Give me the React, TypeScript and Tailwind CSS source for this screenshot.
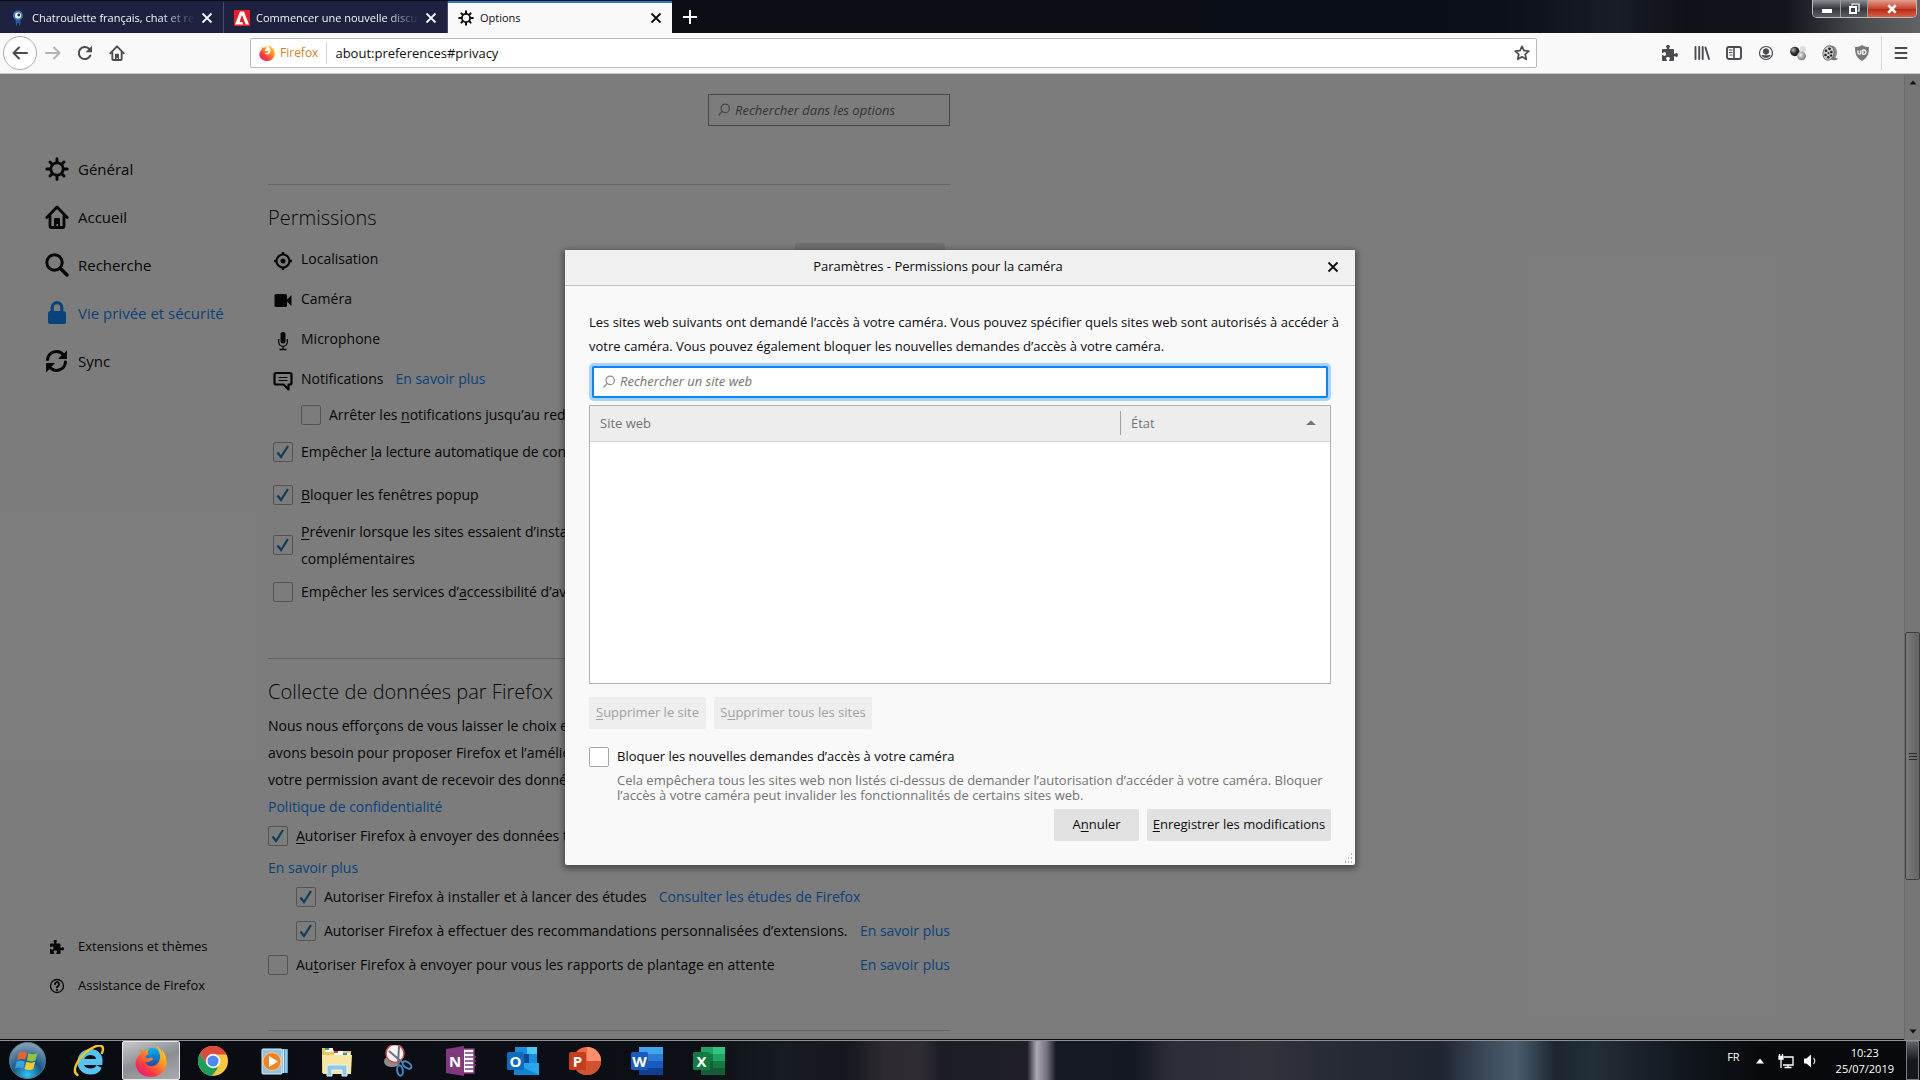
import type { ReactNode } from "react";

// ---------- Icons ----------

type IconProps = { className?: string };

const GearIcon = ({ className = "size-4" }: IconProps) => (
  <svg viewBox="0 0 24 24" className={className} fill="none" stroke="currentColor" strokeLinecap="round">
    <circle cx="12" cy="12" r="6.2" strokeWidth="2.8" />
    <path strokeWidth="3" d="M12 5V1.8M12 22.200V19M19 12h3.200M1.800 12H5M17 7l2-2M5 19l2-2M17 17l2 2M5 5l2 2" />
  </svg>
);

const HomeIcon = ({ className = "size-4" }: IconProps) => (
  <svg viewBox="0 0 24 24" className={className} fill="none" stroke="currentColor" strokeWidth="2.800">
    <path strokeLinecap="round" strokeLinejoin="round" d="M1.800 12.500 12 2l10.200 10.500M5 11v10a1.500 1.500 0 0 0 1.500 1.500h11A1.500 1.500 0 0 0 19 21V11" />
    <path fill="currentColor" stroke="none" d="M9 22v-8a1 1 0 0 1 1-1h4a1 1 0 0 1 1 1v8h-2v-3h-1.500v3z" />
  </svg>
);

const SearchIcon = ({ className = "size-6" }: IconProps) => (
  <svg viewBox="0 0 24 24" className={className} fill="none" stroke="currentColor" strokeLinecap="round">
    <circle cx="9.500" cy="9.500" r="7.700" strokeWidth="3" />
    <path strokeWidth="3.400" d="m15.500 15.500 6.500 6.500" />
  </svg>
);

const LockIcon = ({ className = "size-6" }: IconProps) => (
  <svg viewBox="0 0 24 24" className={className}>
    <rect x="3" y="10" width="18" height="13" rx="2.500" fill="currentColor" />
    <path d="M7.200 11V6.500a4.800 4.800 0 0 1 9.600 0V11" fill="none" stroke="currentColor" strokeWidth="3.200" />
  </svg>
);

const SyncIcon = ({ className = "size-6" }: IconProps) => (
  <svg viewBox="0 0 24 24" className={className} fill="none" stroke="currentColor" strokeWidth="3">
    <path strokeLinecap="round" d="M2.500 10.500A9 9 0 0 1 18.500 6M20.500 13A9 9 0 0 1 5 18.500" />
    <path fill="currentColor" stroke="none" d="M22 1v9h-9l3.200-3.200L19.500 4ZM1 23.500V14h9l-3.200 3.200L3.500 21Z" />
  </svg>
);

const PuzzleIcon = ({ className = "size-4" }: IconProps) => (
  <svg viewBox="0 0 16 16" className={className} fill="currentColor">
    <path d="M14.500 8c-.971 0-1 1-1.750 1a.765.765 0 0 1-.750-.750V5a1 1 0 0 0-1-1H7.750A.765.765 0 0 1 7 3.250c0-.750 1-.779 1-1.750C8 .635 7.100 0 6 0S4 .635 4 1.500c0 .971 1 1 1 1.750a.765.765 0 0 1-.750.750H1a1 1 0 0 0-1 1v2.250A.765.765 0 0 0 .750 8c.750 0 .779-1 1.750-1C3.365 7 4 7.900 4 9s-.635 2-1.500 2c-.971 0-1-1-1.750-1a.765.765 0 0 0-.750.750V15a1 1 0 0 0 1 1h3.250a.765.765 0 0 0 .750-.750c0-.750-1-.779-1-1.750 0-.865.900-1.500 2-1.500s2 .635 2 1.500c0 .971-1 1-1 1.750a.765.765 0 0 0 .750.750H11a1 1 0 0 0 1-1v-3.250a.765.765 0 0 1 .750-.750c.750 0 .779 1 1.750 1 .865 0 1.500-.900 1.500-2s-.635-2-1.500-2z" />
  </svg>
);

const HelpIcon = ({ className = "size-4" }: IconProps) => (
  <svg viewBox="0 0 16 16" className={className} fill="none" stroke="currentColor">
    <circle cx="8" cy="8" r="6.500" strokeWidth="1.300" />
    <path strokeWidth="1.900" strokeLinecap="round" d="M5.900 6.200a2.100 2.100 0 1 1 3.100 1.900c-.7.400-1 .7-1 1.300" />
    <circle cx="8" cy="12" r="1.100" fill="currentColor" stroke="none" />
  </svg>
);

const LocationIcon = () => (
  <svg viewBox="0 0 20 20" className="size-5" fill="none" stroke="currentColor">
    <circle cx="10" cy="10" r="6.500" strokeWidth="2.200" />
    <circle cx="10" cy="10" r="2.500" fill="currentColor" stroke="none" />
    <path strokeWidth="2.500" d="M10 1v3M10 16v3M1 10h3M16 10h3" />
  </svg>
);

const CameraIcon = () => (
  <svg viewBox="0 0 20 20" className="size-5" fill="currentColor">
    <rect x="1.500" y="3" width="12.500" height="13" rx="1.500" />
    <path d="M13 9.500 18.500 4v11z" />
  </svg>
);

const MicIcon = () => (
  <svg viewBox="0 0 20 20" className="size-5" fill="none" stroke="currentColor">
    <rect x="7.500" y="1" width="5" height="11.500" rx="2.500" fill="currentColor" stroke="none" />
    <path strokeWidth="1.300" d="M5.700 8v3a4.300 4.300 0 0 0 8.600 0V8M10 15v3M6.500 18.500h7" />
  </svg>
);

const NotificationIcon = () => (
  <svg viewBox="0 0 20 20" className="size-5" fill="none" stroke="currentColor">
    <path strokeWidth="2.200" strokeLinejoin="round" d="M3 2h14A1.500 1.500 0 0 1 18.500 3.500v8.500a1.500 1.500 0 0 1-1.500 1.500H15.500v5l-5-5H3A1.500 1.500 0 0 1 1.500 12v-8.500A1.500 1.500 0 0 1 3 2z" />
    <path strokeWidth="1.200" d="M5.500 6.500h9M5.500 9.500h9" />
  </svg>
);

const MagnifierIcon = () => (
  <svg viewBox="0 0 14 14" className="size-3.5 shrink-0" fill="none" stroke="#8c8c8e" strokeWidth="1.200">
    <circle cx="8.200" cy="5.400" r="4.200" />
    <path d="M5.300 8.400 1.500 12.500" />
  </svg>
);

const CloseIcon = ({ className = "size-3" }: IconProps) => (
  <svg viewBox="0 0 12 12" className={className} fill="none" stroke="currentColor" strokeWidth="1.800">
    <path d="m1.500 1.500 9 9M10.500 1.500l-9 9" />
  </svg>
);

const FirefoxLogo = ({ className = "size-4" }: IconProps) => (
  <svg viewBox="0 0 32 32" className={className}>
    <defs>
      <linearGradient id="fx-body" x1="1" y1="0" x2="0.200" y2="1">
        <stop offset="0" stopColor="#ffe226" />
        <stop offset="0.400" stopColor="#ff9a1f" />
        <stop offset="0.750" stopColor="#ff3b3f" />
        <stop offset="1" stopColor="#e31587" />
      </linearGradient>
      <linearGradient id="fx-globe" x1="0" y1="0" x2="0" y2="1">
        <stop offset="0" stopColor="#00b3f4" />
        <stop offset="1" stopColor="#23339b" />
      </linearGradient>
    </defs>
    <circle cx="17" cy="14" r="11" fill="url(#fx-globe)" />
    <path
      fill="url(#fx-body)"
      d="M5.500 3c-.5 2.500.2 4 .8 5C2 12 0 16.500.8 20.500 2 27.500 8.500 32 16 32c9 0 15.500-7 15.500-15 0-6.500-3-10.500-5-13 1 2.500.5 4 .5 4-1-3.500-4-6-6-7.500 1.500 3.500 4.500 7 4 12-.4 5-4 8.500-8.500 8.500-3.500 0-6-2-6.500-4.500 1.500 1 3.500 1 5-.2 1.300-1 2.500-1.300 3-2 .2-.8-.8-1.800-2.500-1.500-1.700.4-2.500 1-4 .4-.9-.4-1.200-1.200-.8-2.200.5-1 2-1.300 2.800-1.800.3-1.300-.2-2-.8-2.400.2-1.200 1-2.300 2-3-2 0-4 1-5 2.500C8 5.700 6.500 5 5.500 3z"
    />
  </svg>
);

// Flat variant used in the address bar
const FirefoxMark = () => (
  <svg viewBox="0 0 32 32" className="size-4">
    <path
      fill="url(#fx-body)"
      d="M5.500 3c-.5 2.500.2 4 .8 5C2 12 0 16.500.8 20.500 2 27.500 8.500 32 16 32c9 0 15.500-7 15.500-15 0-6.500-3-10.500-5-13 1 2.500.5 4 .5 4-1-3.500-4-6-8-7.500 0 3.500 3.500 5 4 11-.4 4-2 6-5 7-3 .5-6-.5-7-3 1.500 1 3.500 1 5-.2 1.300-1 2.500-1.300 3-2 .2-.8-.8-1.800-2.500-1.500-1.700.4-2.500 1-4 .4-.9-.4-1.200-1.200-.8-2.200.5-1 2-1.300 2.800-1.800.3-1.300-.2-2-.8-2.400.2-1.200 1-2.300 2-3-2 0-4 1-5 2.500C8 5.700 6.500 5 5.500 3z"
    />
  </svg>
);

// ---------- Small building blocks ----------

function Check({ id, checked = false }: { id: string; checked?: boolean }) {
  return (
    <span className="relative size-5 shrink-0">
      <input
        id={id}
        type="checkbox"
        defaultChecked={checked}
        className="peer block size-5 appearance-none rounded-[2px] border border-[#a6a6a6] bg-transparent"
      />
      <svg viewBox="0 0 20 20" className="pointer-events-none absolute inset-0 hidden size-5 peer-checked:block" fill="none" stroke="#1a7fb8" strokeWidth="2.200">
        <path d="m4.500 10.500 3.500 4.500 7-11" />
      </svg>
    </span>
  );
}

const Key = ({ children }: { children: ReactNode }) => (
  <span className="underline underline-offset-2">{children}</span>
);

const Link = ({ children, className = "" }: { children: ReactNode; className?: string }) => (
  <a href="#privacy" className={`whitespace-nowrap text-[#1484f5] ${className}`}>
    {children}
  </a>
);

// ---------- Window chrome ----------

const tabs = [
  {
    title: "Chatroulette français, chat et rencontre",
    active: false,
    icon: (
      <svg viewBox="0 0 16 16" className="size-4">
        <circle cx="8" cy="5.500" r="5" fill="#3f74b5" />
        <circle cx="8" cy="5.500" r="3" fill="#fff" />
        <circle cx="8.800" cy="5" r="1.400" fill="#16254a" />
        <path d="M5.500 10h5l-.5 5.500H9V13H7v2.500H6z" fill="#2a5a9b" />
      </svg>
    ),
  },
  {
    title: "Commencer une nouvelle discussion",
    active: false,
    icon: (
      <svg viewBox="0 0 16 16" className="size-4">
        <path fill="#ed1c24" d="M0 0h16v16H0z" />
        <path fill="#fff" d="M6 1.500h4l5 13h-3.300L8 5l-2.200 6h3l.9 3.500H1z" />
        <path fill="#ed1c24" d="m8 6 3 8.500H9.200L8.300 12H5.800z" />
      </svg>
    ),
  },
  { title: "Options", active: true, icon: <GearIcon /> },
];

function TabBar() {
  return (
    <header className="flex h-[33px] bg-[linear-gradient(90deg,#0b0e14_0%,#0b0e14_55%,#0a0f18_78%,#181c24_84%,#0f1218_88%,#11151b_93%,#4a4d50_97%,#606264_100%)]">
      <div role="tablist" className="flex pt-px">
        {tabs.map((tab) => (
          <div
            key={tab.title}
            role="tab"
            aria-selected={tab.active}
            className={`flex w-56 items-center border-t-2 pr-2.5 pl-2.5 text-[11px] ${
              tab.active
                ? "border-t-[#2a7bd0] bg-[#f9f9fa] text-[#0c0c0d]"
                : "border-t-transparent border-r border-r-[#4b4e68] bg-[#1e2140] text-[#f4f4f6]"
            }`}
          >
            {tab.icon}
            <span
              className={`ml-1.5 flex-1 overflow-hidden whitespace-nowrap ${
                tab.active ? "" : "[mask-image:linear-gradient(90deg,#000_80%,transparent)]"
              }`}
            >
              {tab.title}
            </span>
            <button aria-label="Fermer l’onglet" className="ml-1.5">
              <CloseIcon />
            </button>
          </div>
        ))}
      </div>
      <button aria-label="Nouvel onglet" className="grid w-9 place-items-center text-white">
        <svg viewBox="0 0 16 16" className="size-4" stroke="currentColor" strokeWidth="2">
          <path d="M8 1v14M1 8h14" />
        </svg>
      </button>
      <div className="mr-[3px] ml-auto flex h-[18px] overflow-hidden rounded-b-[5px] border border-t-0 border-[#b9bcc0] text-white">
        <button aria-label="Réduire" className="grid w-7 place-items-center border-r border-[#9a9da1] bg-[linear-gradient(#8b8e92,#35393f_50%,#5a5e63)]">
          <span className="mt-1 h-1 w-2.5 bg-white" />
        </button>
        <button aria-label="Restaurer" className="grid w-[27px] place-items-center border-r border-[#9a9da1] bg-[linear-gradient(#8b8e92,#35393f_50%,#5a5e63)]">
          <svg viewBox="0 0 12 12" className="size-3" fill="none" stroke="currentColor">
            <path strokeWidth="1.200" d="M4 2.500V1h7v7H9.500" />
            <path strokeWidth="2" d="M2 4h6v6H2z" />
          </svg>
        </button>
        <button aria-label="Fermer" className="grid w-12 place-items-center bg-[linear-gradient(#e0a092,#c9442c_50%,#b92c14_55%,#d8604a)]">
          <CloseIcon className="size-2.5 stroke-[3]" />
        </button>
      </div>
    </header>
  );
}

const toolIcons = [
  { label: "Modules", icon: <PuzzleIcon /> },
  {
    label: "Bibliothèque",
    icon: (
      <svg viewBox="0 0 16 16" className="size-4" stroke="currentColor" strokeWidth="1.900" strokeLinecap="round">
        <path d="M1.500 2v12M5.200 2v12M8.700 2v12M11.500 2.500 15 14" />
      </svg>
    ),
  },
  {
    label: "Barres latérales",
    icon: (
      <svg viewBox="0 0 16 16" className="size-4" fill="none" stroke="currentColor">
        <rect x="1" y="2" width="14" height="12" rx="2" strokeWidth="1.900" />
        <path strokeWidth="1.600" d="M8 2v12" />
        <path d="M3 5h3.500M3 7.500h3.500M3.500 10H6.500" />
      </svg>
    ),
  },
  {
    label: "Compte",
    icon: (
      <svg viewBox="0 0 16 16" className="size-4" fill="none" stroke="currentColor">
        <circle cx="8" cy="8" r="6.500" strokeWidth="1.200" />
        <circle cx="8" cy="6.500" r="2.700" fill="currentColor" />
        <path fill="currentColor" stroke="none" d="M3.500 10.300c1.500-.6 2.200 0 4.500 0s3-.6 4.500 0C11.500 12.300 10 13 8 13s-3.500-.7-4.500-2.700z" />
      </svg>
    ),
  },
  {
    label: "Lightbeam",
    icon: (
      <svg viewBox="0 0 16 16" className="size-4">
        <defs>
          <radialGradient id="ball-dark" cx="0.350" cy="0.350" r="0.700">
            <stop offset="0" stopColor="#bbb" />
            <stop offset="0.500" stopColor="#333" />
            <stop offset="1" stopColor="#111" />
          </radialGradient>
          <radialGradient id="ball-grey" cx="0.400" cy="0.400" r="0.700">
            <stop offset="0" stopColor="#eee" />
            <stop offset="1" stopColor="#666" />
          </radialGradient>
        </defs>
        <circle cx="13" cy="4" r="3" fill="#dcdcdc" />
        <circle cx="4.800" cy="6.500" r="4.700" fill="url(#ball-dark)" />
        <circle cx="11.500" cy="10.800" r="4.400" fill="url(#ball-grey)" />
      </svg>
    ),
  },
  {
    label: "Video DownloadHelper",
    icon: (
      <svg viewBox="0 0 16 16" className="size-4">
        <ellipse cx="9.500" cy="7.500" rx="5.500" ry="7" fill="#8b8b8b" />
        <path d="M11 12c2 .5 3 1 5 1.800-1.500 1.800-5 1.800-7 .8z" fill="#777" />
        <ellipse cx="6.500" cy="8" rx="5.500" ry="7.300" transform="rotate(12 6.500 8)" fill="#d0d0d0" stroke="#5a5a5a" strokeWidth=".8" />
        <g fill="#222">
          <circle cx="6.500" cy="8" r="1" />
          <circle cx="7.500" cy="3.800" r="1.400" />
          <circle cx="4" cy="5.800" r="1.300" />
          <circle cx="3.500" cy="10" r="1.300" />
          <circle cx="6.300" cy="12.300" r="1.300" />
          <circle cx="9.400" cy="7" r="1.300" />
          <circle cx="9" cy="10.500" r="1.200" />
        </g>
      </svg>
    ),
  },
  {
    label: "uBlock Origin",
    icon: (
      <svg viewBox="0 0 16 16" className="size-4">
        <path fill="#7a7a7a" d="M8 0c2 1.500 4.500 2 7 2 0 7-1.500 11-7 14C2.500 13 1 9 1 2c2.500 0 5-.5 7-2z" />
        <path fill="none" stroke="#fff" strokeWidth="1.300" d="M4 5.200v2.600a1.400 1.400 0 0 0 2.800 0V5.200M8.800 5.200v4a2.200 2.200 0 1 0 0-4z" />
      </svg>
    ),
  },
];

function NavBar() {
  return (
    <nav className="flex h-[41px] items-center border-b border-[#c9c9cb] bg-[#f9f9fa] text-[#4a4a4f]">
      <div className="flex w-[250px] items-center pl-[3px]">
        <button aria-label="Précédent" className="grid size-[34px] place-items-center rounded-full border border-[#adadb0] bg-white">
          <svg viewBox="0 0 16 16" className="size-4" fill="none" stroke="currentColor" strokeWidth="2" strokeLinecap="round" strokeLinejoin="round">
            <path d="M15 8H1.500M7 2.500 1.500 8 7 13.500" />
          </svg>
        </button>
        <button aria-label="Suivant" className="grid size-8 place-items-center text-[#b4b4b7]">
          <svg viewBox="0 0 16 16" className="size-4" fill="none" stroke="currentColor" strokeWidth="2" strokeLinecap="round" strokeLinejoin="round">
            <path d="M1 8h13.500M9 2.500 14.500 8 9 13.500" />
          </svg>
        </button>
        <button aria-label="Actualiser" className="grid size-8 place-items-center">
          <svg viewBox="0 0 16 16" className="size-4" fill="none" stroke="currentColor" strokeWidth="2">
            <path strokeLinecap="round" d="M13.300 10.500A6 6 0 1 1 12 3.800" />
            <path fill="currentColor" stroke="none" d="M15 .8v6.400H8.600z" />
          </svg>
        </button>
        <button aria-label="Accueil" className="grid size-8 place-items-center">
          <HomeIcon />
        </button>
      </div>
      <div className="flex h-[30px] flex-1 items-center rounded-[2px] border border-[#b9b9bb] bg-white text-[13px]">
        <span className="flex items-center gap-[5px] border-r border-[#d7d7db] py-px pr-2 pl-2 text-xs leading-5 text-[#d7821c]">
          <FirefoxMark />
          Firefox
        </span>
        <input aria-label="Adresse" defaultValue="about:preferences#privacy" className="ml-2 flex-1 pt-px text-[#0c0c0d] outline-none" />
        <button aria-label="Marquer cette page" className="mr-1.5">
          <svg viewBox="0 0 16 16" className="size-4" fill="none" stroke="currentColor" strokeWidth="1.700" strokeLinejoin="round">
            <path d="m8 1.300 2 4.400 4.800.5-3.600 3.200 1.100 4.900L8 11.800l-4.300 2.500 1.100-4.900L1.200 6.200 6 5.700z" />
          </svg>
        </button>
      </div>
      <div className="flex w-[383px] items-center justify-end pr-[3px]">
        {toolIcons.map((tool) => (
          <button key={tool.label} aria-label={tool.label} className="grid size-8 place-items-center">
            {tool.icon}
          </button>
        ))}
        <span className="mx-[3px] h-[34px] w-px bg-[#d7d7db]" />
        <button aria-label="Menu" className="grid size-8 place-items-center">
          <svg viewBox="0 0 16 16" className="size-4" stroke="currentColor" strokeWidth="1.900" strokeLinecap="round">
            <path d="M2.500 3h11M2.500 8h11M2.500 13h11" />
          </svg>
        </button>
      </div>
    </nav>
  );
}

// ---------- Preferences page ----------

const categories = [
  { label: "Général", icon: <GearIcon className="size-6" /> },
  { label: "Accueil", icon: <HomeIcon className="size-6" /> },
  { label: "Recherche", icon: <SearchIcon /> },
  { label: "Vie privée et sécurité", icon: <LockIcon />, active: true },
  { label: "Sync", icon: <SyncIcon /> },
];

function Sidebar() {
  return (
    <aside className="flex w-[268px] shrink-0 flex-col justify-between pt-[71px] pb-[35px] pl-[45px]">
      <ul>
        {categories.map((c) => (
          <li key={c.label}>
            <a href="#privacy" className={`flex h-12 items-center gap-[9px] text-[15px] ${c.active ? "text-[#1484f5]" : ""}`}>
              {c.icon}
              {c.label}
            </a>
          </li>
        ))}
      </ul>
      <ul className="text-[13px]">
        <li>
          <a href="#addons" className="flex h-[39px] items-center gap-[9px]">
            <span className="grid w-6 place-items-center"><PuzzleIcon className="size-3.5" /></span>
            Extensions et thèmes
          </a>
        </li>
        <li>
          <a href="#help" className="flex h-[39px] items-center gap-[9px]">
            <span className="grid w-6 place-items-center"><HelpIcon /></span>
            Assistance de Firefox
          </a>
        </li>
      </ul>
    </aside>
  );
}

const permissions = [
  { label: "Localisation", icon: <LocationIcon /> },
  { label: "Caméra", icon: <CameraIcon /> },
  { label: "Microphone", icon: <MicIcon /> },
  { label: "Notifications", icon: <NotificationIcon />, more: true },
];

function Preferences() {
  return (
    <main className="flex w-[682px] shrink-0 flex-col pt-5 text-sm">
      <label className="flex h-8 w-[242px] items-center gap-1 self-end border border-[#8f8f91] px-2">
        <MagnifierIcon />
        <input placeholder="Rechercher dans les options" className="min-w-0 flex-1 text-[13px] italic outline-none placeholder:text-[#6b6b6e]" />
      </label>

      <section className="mt-[58px] border-t border-[#c8c8ca]">
        <h2 className="mt-[17px] mb-[5px] text-xl leading-8 font-light">Permissions</h2>
        <div className="pl-[5px]">
          {permissions.map((p) => (
            <div key={p.label} className="flex h-10 items-center gap-2">
              <span className="pt-1">{p.icon}</span>
              <span className="flex-1">
                {p.label}
                {p.more && <Link className="ml-3">En savoir plus</Link>}
              </span>
              <button className="mr-[5px] h-8 w-[150px] rounded-[2px] bg-[#e1e1e2]">Paramètres…</button>
            </div>
          ))}
          <div className="flex h-8 items-center gap-2 pl-7">
            <Check id="pause" />
            <label htmlFor="pause">Arrêter les <Key>n</Key>otifications jusqu’au redémarrage de Firefox</label>
          </div>
          <div className="flex h-[42px] items-center gap-2">
            <Check id="autoplay" checked />
            <label htmlFor="autoplay">Empêcher <Key>l</Key>a lecture automatique de contenu sonore</label>
          </div>
          <div className="flex h-11 items-center gap-2">
            <Check id="popup" checked />
            <label htmlFor="popup"><Key>B</Key>loquer les fenêtres popup</label>
          </div>
          <div className="flex h-14 items-center gap-2">
            <Check id="install" checked />
            <label htmlFor="install" className="leading-[27px]">
              <Key>P</Key>révenir lorsque les sites essaient d’installer des modules
              <br />
              complémentaires
            </label>
          </div>
          <div className="flex h-[38px] items-center gap-2">
            <Check id="a11y" />
            <label htmlFor="a11y">Empêcher les services d’<Key>a</Key>ccessibilité d’avoir accès à votre navigateur</label>
          </div>
        </div>
      </section>

      <section className="mt-[47px] border-t border-[#c8c8ca]">
        <h2 className="mt-[17px] mb-1 text-xl leading-8 font-light">Collecte de données par Firefox</h2>
        <p className="mb-px leading-[27px] whitespace-nowrap">
          Nous nous efforçons de vous laisser le choix et de recueillir seulement ce dont nous
          <br />
          avons besoin pour proposer Firefox et l’améliorer pour tout le monde. Nous demandons
          <br />
          votre permission avant de recevoir des données personnelles.
          <br />
          <Link>Politique de confidentialité</Link>
        </p>
        <div className="flex h-[30px] items-center gap-2">
          <Check id="telemetry" checked />
          <label htmlFor="telemetry"><Key>A</Key>utoriser Firefox à envoyer des données techniques à Mozilla</label>
        </div>
        <div className="flex h-[34px] items-center">
          <Link>En savoir plus</Link>
        </div>
        <div className="flex h-6 items-center gap-2 pl-7">
          <Check id="studies" checked />
          <label htmlFor="studies">Autoriser Firefox à installer et à lancer des études</label>
          <Link className="ml-1">Consulter les études de Firefox</Link>
        </div>
        <div className="flex h-11 items-center gap-2 pl-7">
          <Check id="recommend" checked />
          <label htmlFor="recommend" className="whitespace-nowrap">
            Autoriser Firefox à effectuer des recommandations personnalisées d’extensions.
          </label>
          <Link className="ml-auto">En savoir plus</Link>
        </div>
        <div className="flex h-6 items-center gap-2">
          <Check id="crash" />
          <label htmlFor="crash">Au<Key>t</Key>oriser Firefox à envoyer pour vous les rapports de plantage en attente</label>
          <Link className="ml-auto">En savoir plus</Link>
        </div>
      </section>
      <hr className="mt-[53px] border-[#c8c8ca]" />
    </main>
  );
}

function Scrollbar() {
  return (
    <div aria-hidden="true" className="ml-auto flex w-4 shrink-0 flex-col items-center border-l border-[#d8d8d8] bg-[#ececec]">
      <svg viewBox="0 0 16 17" className="h-[17px] w-4"><path d="M4.500 10.500h7L8 6.500z" fill="#222" /></svg>
      <span className="flex-[543]" />
      <span className="flex w-full flex-[247] flex-col items-center justify-center gap-0.5 rounded-[2px] border border-[#7c7c7c] bg-[linear-gradient(90deg,#f3f3f3,#c9c9cb)]">
        <i className="h-px w-2 bg-[#555]" />
        <i className="h-px w-2 bg-[#555]" />
        <i className="h-px w-2 bg-[#555]" />
      </span>
      <span className="flex-[143]" />
      <svg viewBox="0 0 16 17" className="h-[17px] w-4"><path d="M4.500 6.500h7l-3.500 4z" fill="#222" /></svg>
    </div>
  );
}

// ---------- Permissions dialog ----------

function PermissionsDialog() {
  return (
    <div role="dialog" aria-labelledby="dialog-title" className="relative w-[790px] rounded-[2px] bg-[#f9f9fa] text-[13px] text-[#0c0c0d] shadow-[0_2px_6px_2px_rgba(0,0,0,0.4)]">
      <div className="flex h-9 items-center border-b border-[#c1c1c1] bg-[#f0f0f1] pr-4">
        <h1 id="dialog-title" className="flex-1 pr-4 text-center font-medium">Paramètres - Permissions pour la caméra</h1>
        <button aria-label="Fermer"><CloseIcon /></button>
      </div>
      <div className="px-6 py-6">
        <p className="leading-6 whitespace-nowrap">
          Les sites web suivants ont demandé l’accès à votre caméra. Vous pouvez spécifier quels sites web sont autorisés à accéder à
          <br />
          votre caméra. Vous pouvez également bloquer les nouvelles demandes d’accès à votre caméra.
        </p>
        <label className="mx-[3px] mt-2 flex h-8 items-center gap-1 rounded-[2px] border-2 border-[#0a84ff] bg-white px-2 shadow-[0_0_0_3px_#a9d2fb]">
          <MagnifierIcon />
          <input placeholder="Rechercher un site web" className="flex-1 pt-px italic outline-none placeholder:text-[#737373]" />
        </label>
        <div className="mt-[7px] h-[279px] border border-[#b1b1b3] bg-white">
          <table className="w-full table-fixed border-b border-[#d4d4d6] bg-[#ededee] text-left text-[#737373]">
            <thead>
              <tr className="h-9">
                <th scope="col" className="pl-2.5 font-normal">Site web</th>
                <th scope="col" className="w-[210px] font-normal">
                  <span className="flex h-6 items-center justify-between border-l border-[#a0a0a2] pr-3.5 pl-2.5">
                    État
                    <svg viewBox="0 0 10 6" className="h-1.5 w-2.5"><path d="M0 5h10L5 .5z" fill="#737373" /></svg>
                  </span>
                </th>
              </tr>
            </thead>
            <tbody />
          </table>
        </div>
        <div className="mt-[13px] flex gap-2 text-[#a0a0a2]">
          <button disabled className="h-8 w-[117px] rounded-[2px] bg-[#eeeeef]"><Key>S</Key>upprimer le site</button>
          <button disabled className="h-8 w-[158px] rounded-[2px] bg-[#eeeeef]">S<Key>u</Key>pprimer tous les sites</button>
        </div>
        <div className="mt-[18px] flex h-5 items-center gap-2">
          <span className="bg-white"><Check id="block" /></span>
          <label htmlFor="block">Bloquer les nouvelles demandes d’accès à votre caméra</label>
        </div>
        <p className="mt-1.5 ml-7 leading-[15px] whitespace-nowrap text-[#737373]">
          Cela empêchera tous les sites web non listés ci-dessus de demander l’autorisation d’accéder à votre caméra. Bloquer
          <br />
          l’accès à votre caméra peut invalider les fonctionnalités de certains sites web.
        </p>
        <div className="mt-1.5 flex justify-end gap-2">
          <button className="h-8 w-[85px] rounded-[2px] bg-[#e1e1e2]">A<Key>n</Key>nuler</button>
          <button className="h-8 w-[184px] rounded-[2px] bg-[#e1e1e2]"><Key>E</Key>nregistrer les modifications</button>
        </div>
      </div>
      <svg viewBox="0 0 10 12" className="absolute right-0.5 bottom-0.5 h-3 w-2.5" fill="#b4b4b4">
        <path d="M8 2h1v2H8zM8 6h1v2H8zM8 10h1v2H8zM5 6h1v2H5zM5 10h1v2H5zM2 10h1v2H2z" />
      </svg>
    </div>
  );
}

// ---------- Taskbar ----------

type OfficeProps = { letter: string; dark: string; children: ReactNode };

const OfficeIcon = ({ letter, dark, children }: OfficeProps) => (
  <svg viewBox="0 0 32 32" className="size-8">
    {children}
    <rect x="0" y="7" width="17" height="18" rx="1.500" fill={dark} />
    <text x="8.500" y="21.500" textAnchor="middle" fontSize="15" fontWeight="700" fill="#fff">{letter}</text>
  </svg>
);

const apps = [
  {
    label: "Internet Explorer",
    icon: (
      <svg viewBox="0 0 32 32" className="size-8">
        <path fill="none" stroke="#56c3f2" strokeWidth="6" d="M8 17h18.500c.5-6-3.500-10-9-10s-10 4-10 10 4.500 9.500 10 9.500c4 0 7-1.500 8.500-5" />
        <path fill="none" stroke="#f5c518" strokeWidth="2.400" strokeLinecap="round" d="M4.500 30C-1 27 3 17 10.500 9.500S27-1.500 29.500 2c1.200 1.800.3 4-.5 6" />
      </svg>
    ),
  },
  { label: "Firefox", icon: <FirefoxLogo className="size-8" />, active: true },
  {
    label: "Chrome",
    icon: (
      <svg viewBox="0 0 32 32" className="size-8">
        <circle cx="16" cy="16" r="15" fill="#fbc83c" />
        <path fill="#dc4a3d" d="M3 8.500A15 15 0 0 1 29.500 9.500H16L9.800 19.500z" />
        <path fill="#1f9d5b" d="M3 8.500 9.800 19.500 16 22.500h5.200L15 31A15 15 0 0 1 3 8.500z" />
        <circle cx="16" cy="16" r="7.200" fill="#fff" />
        <circle cx="16" cy="16" r="5.600" fill="#4a8af4" />
      </svg>
    ),
  },
  {
    label: "Lecteur Windows Media",
    icon: (
      <svg viewBox="0 0 32 32" className="size-8">
        <path fill="#5b9bc4" d="M20 4h9v24h-9z" />
        <path stroke="#d6effb" d="M24.500 4v24M27 4.500v23" />
        <rect x="3" y="4" width="20" height="25" rx="1" fill="#8fc3e2" stroke="#d6effb" />
        <circle cx="13" cy="16.500" r="9" fill="#f08222" stroke="#ffc78a" />
        <path fill="#fff" d="m10 11 9 5.500-9 5.500z" />
      </svg>
    ),
  },
  {
    label: "Explorateur",
    icon: (
      <svg viewBox="0 0 32 32" className="size-8">
        <path fill="#e5c765" d="M1 3h10l2 3h17v22H1z" />
        <path fill="#fff" d="M4 3h8v4H4zM13 6h9v4h-9zM21 8h8v4h-8z" />
        <path fill="#3fa64a" d="M4 3h4v2H4z" />
        <path fill="#c8403a" d="M13 6h4v2h-4z" />
        <path fill="#3585d0" d="M22 8h4v2h-4z" />
        <path fill="#f6e6a0" d="M1 10h30l-1 19H2z" />
        <path fill="#8cc9e8" stroke="#e2f5fd" d="M6 20h20v11h-5v-6H11v6H6z" />
      </svg>
    ),
  },
  {
    label: "Outil Capture",
    icon: (
      <svg viewBox="0 0 32 32" className="size-8">
        <ellipse cx="9" cy="16.500" rx="8" ry="5.500" fill="#8e8e92" />
        <circle cx="12" cy="8.500" r="9" fill="#f4f4f6" stroke="#cf4a4a" strokeWidth="1.500" />
        <path stroke="#6d7278" strokeWidth="2" d="M6 6 20 18M16 1l-1 18" />
        <ellipse cx="24" cy="20" rx="5" ry="2.800" transform="rotate(35 24 20)" fill="none" stroke="#3f8cc8" strokeWidth="2" />
        <ellipse cx="17" cy="25.500" rx="2.800" ry="5.200" transform="rotate(-10 17 25.500)" fill="none" stroke="#3f8cc8" strokeWidth="2" />
      </svg>
    ),
  },
  {
    label: "OneNote",
    icon: (
      <svg viewBox="0 0 32 32" className="size-8">
        <rect x="17" y="4" width="12" height="24" fill="#fff" stroke="#80397b" strokeWidth="1.500" />
        <path stroke="#80397b" strokeWidth="1.500" d="M20 8h9M20 12h11M20 16h11M20 20h11M20 24h9" />
        <path fill="#80397b" d="M1 4 19 1v30L1 28z" />
        <text x="10" y="21.500" textAnchor="middle" fontSize="15" fontWeight="700" fill="#fff">N</text>
      </svg>
    ),
  },
  {
    label: "Outlook",
    icon: (
      <OfficeIcon letter="O" dark="#0f6cbd">
        <path fill="#1a8fdf" d="M8 2h22v16H8z" />
        <path fill="#50c8f5" d="M20 2h10v7H20z" />
        <path fill="#0a4a94" d="M13 9h9v9h-9z" />
        <path fill="#28a8ea" d="M7 18h25v12H7z" />
        <path fill="#1383d4" d="m7 18 25 12H7z" />
      </OfficeIcon>
    ),
  },
  {
    label: "PowerPoint",
    icon: (
      <OfficeIcon letter="P" dark="#c43e1c">
        <circle cx="18" cy="16" r="14" fill="#ed6c47" />
        <path fill="#ff8f6b" d="M18 2a14 14 0 0 1 14 14H18z" />
        <path fill="#d35230" d="M4 16h28a14 14 0 0 1-28 0z" />
      </OfficeIcon>
    ),
  },
  {
    label: "Word",
    icon: (
      <OfficeIcon letter="W" dark="#185abd">
        <path fill="#41a5ee" d="M8 2h24v7H8z" />
        <path fill="#2b7cd3" d="M8 9h24v7H8z" />
        <path fill="#185abd" d="M8 16h24v7H8z" />
        <path fill="#103f91" d="M8 23h24v7H8z" />
      </OfficeIcon>
    ),
  },
  {
    label: "Excel",
    icon: (
      <OfficeIcon letter="X" dark="#107c41">
        <path fill="#21a366" d="M8 2h24v14H8z" />
        <path fill="#33c481" d="M20 2h12v7H20z" />
        <path fill="#107c41" d="M8 9h12v7H8zM20 16h12v7H20z" />
        <path fill="#185c37" d="M8 16h12v14H8zM20 23h12v7H20z" />
      </OfficeIcon>
    ),
  },
];

function Taskbar() {
  return (
    <footer className="flex h-10 items-stretch border-t border-[#8d9094] bg-[linear-gradient(90deg,#080b10_0%,#0c1016_36%,#171b22_41%,#14171d_44%,#2c2a30_46%,#2f2d33_48%,#1c1d24_49%,#201f27_53.500%,#77738099_54%,#777380_54.500%,#161a24_55%,#131823_59%,#2c2d36_61%,#32323b_66%,#252a35_70%,#202532_75%,#3d4c5b_77.500%,#4a5c6d_79%,#1c2731_81%,#222e37_83%,#10161b_88%,#07090c_92%,#07090c_100%)] outline outline-[#15181c]">
      <button aria-label="Démarrer" className="w-[58px] pl-2">
        <svg viewBox="0 0 40 40" className="size-[39px]">
          <defs>
            <radialGradient id="orb" cx="0.500" cy="0.900" r="0.900">
              <stop offset="0" stopColor="#31c3ef" />
              <stop offset="0.450" stopColor="#15598c" />
              <stop offset="1" stopColor="#8fa6b8" />
            </radialGradient>
          </defs>
          <circle cx="20" cy="20" r="18.500" fill="url(#orb)" stroke="#5d7688" />
          <path fill="#e8622c" d="M11 12c3-1.500 5.500-1.500 8.500 0l-1.800 7.500c-3-1.500-5.500-1.300-8.500 0z" />
          <path fill="#8cc63f" d="M21 12.500c3 1.500 5.500 1.500 9 0L28.200 20c-3 1.300-5.500 1.300-8.900 0z" />
          <path fill="#39a3dd" d="M8.800 21c3-1.300 5.500-1.500 8.500 0l-1.800 7.300c-3-1.400-5.500-1.300-8.500 0z" />
          <path fill="#fbc92e" d="M18.800 21.300c3 1.500 5.500 1.500 9 0L26 28.800c-3 1.300-5.700 1.300-9 0z" />
        </svg>
      </button>
      {apps.map((app) => (
        <button
          key={app.label}
          aria-label={app.label}
          className={`mx-0.5 grid w-[58px] place-items-center ${
            app.active ? "rounded-[2px] border border-[#e8e8e8] bg-[linear-gradient(160deg,#c6c8ca,#8b8d90_50%,#a9abad)]" : ""
          }`}
        >
          {app.icon}
        </button>
      ))}
      <div className="ml-auto flex text-[11px] text-white">
        <span className="mt-2 mr-4">FR</span>
        <div className="flex items-center gap-4">
          <svg viewBox="0 0 8 6" className="h-1.5 w-2"><path d="M0 5.500h8L4 .5z" fill="#fff" /></svg>
          <svg viewBox="0 0 16 16" className="-ml-0.5 size-4" fill="none" stroke="#fff" strokeWidth="1.300">
            <path d="M6 4h9v8H5M10 12v2.500M6.500 14.500h7M3 6v9M1.500 1v2.500M4.500 1v2.500" />
            <path d="M1 3.500h4V6H1z" fill="#fff" />
          </svg>
          <svg viewBox="0 0 16 16" className="-ml-2 size-4">
            <path d="M2 5.500h2.500L9 1.500v13L4.500 10.500H2z" fill="#fff" />
            <path d="M11.500 5c1.500 1.800 1.500 4.200 0 6" fill="none" stroke="#cfd3d8" strokeWidth="1.300" />
          </svg>
        </div>
        <div className="mr-3 ml-[18px] self-center text-center leading-4">
          <div>10:23</div>
          <div>25/07/2019</div>
        </div>
        <button aria-label="Afficher le Bureau" className="mr-px w-[13px] border border-[#777b80] bg-[linear-gradient(#5d6064,#15181c_50%)]" />
      </div>
    </footer>
  );
}

export default function App() {
  return (
    <div className="flex h-screen flex-col overflow-hidden bg-[#f9f9fa] font-['Open_Sans','Noto_Sans',sans-serif] text-[#0c0c0d]">
      <TabBar />
      <NavBar />
      <div className="relative flex min-h-0 flex-1">
        <Sidebar />
        <Preferences />
        <Scrollbar />
        {/* Dimmed backdrop with the dialog on top of the page */}
        <div className="absolute inset-0 flex items-center justify-center bg-black/50">
          <PermissionsDialog />
        </div>
      </div>
      <Taskbar />
    </div>
  );
}
